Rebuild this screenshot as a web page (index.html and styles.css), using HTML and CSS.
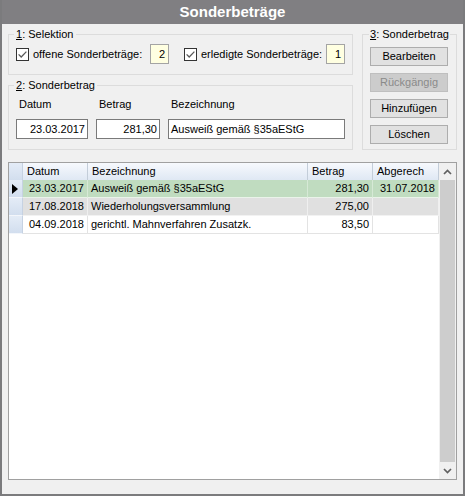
FILE: index.html
```html
<!DOCTYPE html>
<html lang="de">
<head>
<meta charset="utf-8">
<title>Sonderbeträge</title>
<link rel="stylesheet" href="styles.css">
</head>
<body>
<div class="window">
  <div class="titlebar">Sonderbeträge</div>
  <div class="content">
    <div class="top">
      <div class="leftcol">
        <fieldset class="grp g1">
          <legend><u>1</u>: Selektion</legend>
          <div class="selrow">
            <label class="chk chk1">
              <svg class="cb" width="13" height="13" viewBox="0 0 13 13"><rect x="0.5" y="0.5" width="12" height="12" fill="#fff" stroke="#333"/><path d="M2.6 6.4 L5.2 9 L10.4 3.6" fill="none" stroke="#5a5a5a" stroke-width="1.3"/></svg>
              <span>offene Sonderbeträge:</span>
            </label>
            <span class="numbox">2</span>
            <label class="chk chk2">
              <svg class="cb" width="13" height="13" viewBox="0 0 13 13"><rect x="0.5" y="0.5" width="12" height="12" fill="#fff" stroke="#333"/><path d="M2.6 6.4 L5.2 9 L10.4 3.6" fill="none" stroke="#5a5a5a" stroke-width="1.3"/></svg>
              <span>erledigte Sonderbeträge:</span>
            </label>
            <span class="numbox">1</span>
          </div>
        </fieldset>
        <fieldset class="grp g2">
          <legend><u>2</u>: Sonderbetrag</legend>
          <div class="fields">
            <div class="field f-datum">
              <div class="lbl">Datum</div>
              <div class="input right">23.03.2017</div>
            </div>
            <div class="field f-betrag">
              <div class="lbl">Betrag</div>
              <div class="input right">281,30</div>
            </div>
            <div class="field f-bez">
              <div class="lbl">Bezeichnung</div>
              <div class="input">Ausweiß gemäß §35aEStG</div>
            </div>
          </div>
        </fieldset>
      </div>
      <fieldset class="grp g3">
        <legend><u>3</u>: Sonderbetrag</legend>
        <div class="btns">
          <div class="btn">Bearbeiten</div>
          <div class="btn disabled">Rückgängig</div>
          <div class="btn">Hinzufügen</div>
          <div class="btn">Löschen</div>
        </div>
      </fieldset>
    </div>

    <div class="grid">
      <div class="table">
        <div class="hrow">
          <div class="c ind"></div>
          <div class="c dat">Datum</div>
          <div class="c bez">Bezeichnung</div>
          <div class="c bet">Betrag</div>
          <div class="c abg">Abgerech</div>
        </div>
        <div class="row sel">
          <div class="c ind"><svg width="6" height="10" viewBox="0 0 6 10"><path d="M0 0 L6 5 L0 10 Z" fill="#000"/></svg></div>
          <div class="c dat r">23.03.2017</div>
          <div class="c bez">Ausweiß gemäß §35aEStG</div>
          <div class="c bet r">281,30</div>
          <div class="c abg r">31.07.2018</div>
        </div>
        <div class="row alt">
          <div class="c ind"></div>
          <div class="c dat r">17.08.2018</div>
          <div class="c bez">Wiederholungsversammlung</div>
          <div class="c bet r">275,00</div>
          <div class="c abg r"></div>
        </div>
        <div class="row plain">
          <div class="c ind"></div>
          <div class="c dat r">04.09.2018</div>
          <div class="c bez">gerichtl. Mahnverfahren Zusatzk.</div>
          <div class="c bet r">83,50</div>
          <div class="c abg r"></div>
        </div>
      </div>
      <div class="vscroll">
        <div class="arrow"><svg width="9" height="6" viewBox="0 0 9 6"><path d="M1 5 L4.5 1.5 L8 5" fill="none" stroke="#606060" stroke-width="1.7"/></svg></div>
        <div class="thumb"></div>
        <div class="arrow"><svg width="9" height="6" viewBox="0 0 9 6"><path d="M1 1 L4.5 4.5 L8 1" fill="none" stroke="#606060" stroke-width="1.7"/></svg></div>
      </div>
    </div>
  </div>
</div>
</body>
</html>
```

FILE: styles.css
```css
html, body {
  margin: 0;
  padding: 0;
  background: #f0f0f0;
}

body {
  font-family: "Liberation Sans", Arial, sans-serif;
  font-size: 11px;
  color: #000;
}

.window {
  width: 465px;
  height: 496px;
  box-sizing: border-box;
  border: 2px solid #7b7b7d;
  border-top: 0;
  background: #f0f0f0;
  display: flex;
  flex-direction: column;
}

.titlebar {
  height: 24px;
  line-height: 24px;
  background: #807f82;
  color: #fff;
  font-size: 15px;
  font-weight: bold;
  text-align: center;
  flex: none;
}

.content {
  flex: 1;
  display: flex;
  flex-direction: column;
  padding: 3px 6px 14px 6px;
  min-height: 0;
}

.top {
  display: flex;
  gap: 9px;
  flex: none;
}

.leftcol {
  width: 345px;
  display: flex;
  flex-direction: column;
}

.grp {
  margin: 0;
  border: 1px solid #dcdcdc;
  padding: 0 7px;
  min-width: 0;
}

.grp legend {
  padding: 0 2px;
  margin-left: -2px;
  line-height: 14px;
  height: 14px;
  white-space: nowrap;
}

.g1 {
  padding-top: 3px;
  padding-bottom: 10px;
}

.selrow {
  display: flex;
  align-items: center;
  height: 20px;
}

.chk {
  display: flex;
  align-items: center;
  gap: 4px;
  white-space: nowrap;
}

.chk1 { width: 134px; }
.chk2 { width: 142px; margin-left: 15px; }

.cb { flex: none; display: block; }

.numbox {
  width: 19px;
  height: 20px;
  box-sizing: border-box;
  border: 1px solid #a4a4a4;
  background: #ffffe1;
  text-align: right;
  padding-right: 3px;
  line-height: 18px;
}

.g2 {
  margin-top: 3px;
  padding-top: 5px;
  padding-bottom: 10px;
}

.fields {
  display: flex;
  gap: 8px;
}

.field {
  display: flex;
  flex-direction: column;
  gap: 8px;
}

.f-datum { width: 72px; }
.f-betrag { width: 64px; }
.f-bez { flex: 1; }

.lbl {
  line-height: 14px;
  padding-left: 3px;
}

.input {
  height: 20px;
  box-sizing: border-box;
  border: 1px solid #7a7a7a;
  background: #fff;
  line-height: 18px;
  padding: 0 2px;
  white-space: nowrap;
  overflow: hidden;
}

.input.right {
  text-align: right;
}

.g3 {
  flex: 1;
  padding-top: 6px;
  padding-left: 7px;
  padding-right: 7px;
}

.g3 legend {
  padding: 0 1px;
  margin-left: -1px;
}

.btns {
  display: flex;
  flex-direction: column;
  gap: 7px;
}

.btn {
  height: 19px;
  width: 78px;
  box-sizing: border-box;
  border: 1px solid #adadad;
  background: #e1e1e1;
  text-align: center;
  line-height: 17px;
}

.btn.disabled {
  background: #cccccc;
  border-color: #bfbfbf;
  color: #8a8a8a;
}

.grid {
  margin-top: 12px;
  flex: 1;
  display: flex;
  border: 1px solid #a0a0a0;
  background: #fff;
  min-height: 0;
}

.table {
  width: 430px;
  display: flex;
  flex-direction: column;
}

.hrow, .row {
  display: flex;
}

.c {
  box-sizing: border-box;
  white-space: nowrap;
  overflow: hidden;
  padding: 0 3px;
}

.c.r { text-align: right; }

.ind { width: 14px; padding: 0; display: flex; align-items: center; justify-content: center; }
.dat { width: 65px; }
.bez { width: 220px; }
.bet { width: 65px; }
.abg { width: 66px; }

.hrow .c {
  height: 17px;
  line-height: 17px;
  background: linear-gradient(to bottom, #f7f9fd 0%, #dfe8f4 100%);
  border-right: 1px solid #c3cdd9;
}

.hrow .dat, .hrow .bez, .hrow .bet, .hrow .abg {
  padding-left: 4px;
}

.row .c {
  height: 18px;
  line-height: 17px;
  border-right: 1px solid #e3e3e3;
  border-bottom: 1px solid #e3e3e3;
}

.row .c.r { padding-right: 3px; }

.row .ind, .hrow .ind {
  background: linear-gradient(to bottom, #e4ecf7 0%, #d2deee 100%);
  border-right: 1px solid #c6d2e2;
}

.row .ind {
  border-bottom: 1px solid #f3f6fb;
}

.row .ind svg { margin-left: -1px; }

.sel .c:not(.ind) {
  background: #c0dcc0;
  border-right-color: #d6e9d6;
  border-bottom-color: #eaf3ea;
}

.alt .c:not(.ind) {
  background: #e0e0e0;
  border-right-color: #efefef;
  border-bottom-color: #f2f2f2;
}

.plain .c:not(.ind) {
  background: #fff;
}

.vscroll {
  width: 17px;
  background: #f0f0f0;
  display: flex;
  flex-direction: column;
}

.arrow {
  height: 17px;
  flex: none;
  display: flex;
  align-items: center;
  justify-content: center;
}

.thumb {
  flex: 1;
  margin: 0 1px;
  background: #cdcdcd;
}
```
